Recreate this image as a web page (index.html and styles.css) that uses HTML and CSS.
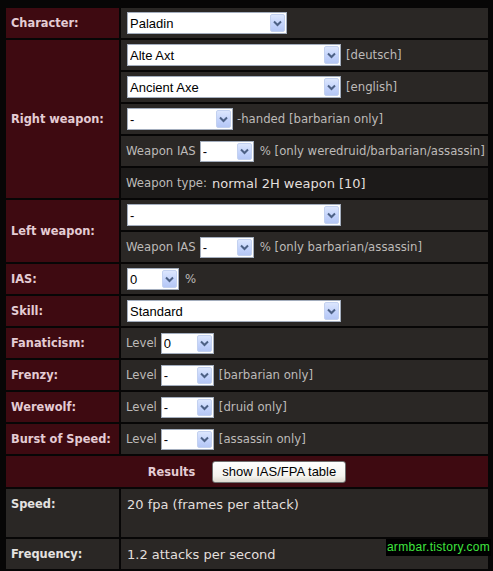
FILE: index.html
```html
<!DOCTYPE html>
<html>
<head>
<meta charset="utf-8">
<link rel="stylesheet" href="styles.css">
</head>
<body>
<div class="calc">
  <div class="lbl">Character:</div>
  <div class="val">
    <span class="sel w160"><select><option>Paladin</option></select><span class="arr"><svg width="9" height="7" viewBox="0 0 9 7"><path d="M1 1.5 L4.5 5 L8 1.5" stroke="#4d6185" stroke-width="2" fill="none"/></svg></span></span>
  </div>

  <div class="lbl rw">Right weapon:</div>
  <div class="val">
    <span class="sel w214"><select><option>Alte Axt</option></select><span class="arr"><svg width="9" height="7" viewBox="0 0 9 7"><path d="M1 1.5 L4.5 5 L8 1.5" stroke="#4d6185" stroke-width="2" fill="none"/></svg></span></span>
    <span class="note after">[deutsch]</span>
  </div>
  <div class="val">
    <span class="sel w214"><select><option>Ancient Axe</option></select><span class="arr"><svg width="9" height="7" viewBox="0 0 9 7"><path d="M1 1.5 L4.5 5 L8 1.5" stroke="#4d6185" stroke-width="2" fill="none"/></svg></span></span>
    <span class="note after">[english]</span>
  </div>
  <div class="val">
    <span class="sel w106"><select><option>-</option></select><span class="arr"><svg width="9" height="7" viewBox="0 0 9 7"><path d="M1 1.5 L4.5 5 L8 1.5" stroke="#4d6185" stroke-width="2" fill="none"/></svg></span></span>
    <span class="note tight">-handed [barbarian only]</span>
  </div>
  <div class="val">
    <span class="note before">Weapon IAS</span>
    <span class="sel w54 small"><select><option>-</option></select><span class="arr"><svg width="9" height="7" viewBox="0 0 9 7"><path d="M1 1.5 L4.5 5 L8 1.5" stroke="#4d6185" stroke-width="2" fill="none"/></svg></span></span>
    <span class="note pct">% [only weredruid/barbarian/assassin]</span>
  </div>
  <div class="val dark">
    <span class="note">Weapon type:</span>
    <span class="big type">normal 2H weapon [10]</span>
  </div>

  <div class="lbl lw">Left weapon:</div>
  <div class="val">
    <span class="sel w214"><select><option>-</option></select><span class="arr"><svg width="9" height="7" viewBox="0 0 9 7"><path d="M1 1.5 L4.5 5 L8 1.5" stroke="#4d6185" stroke-width="2" fill="none"/></svg></span></span>
  </div>
  <div class="val">
    <span class="note before">Weapon IAS</span>
    <span class="sel w54 small"><select><option>-</option></select><span class="arr"><svg width="9" height="7" viewBox="0 0 9 7"><path d="M1 1.5 L4.5 5 L8 1.5" stroke="#4d6185" stroke-width="2" fill="none"/></svg></span></span>
    <span class="note pct">% [only barbarian/assassin]</span>
  </div>

  <div class="lbl">IAS:</div>
  <div class="val">
    <span class="sel w52"><select><option>0</option></select><span class="arr"><svg width="9" height="7" viewBox="0 0 9 7"><path d="M1 1.5 L4.5 5 L8 1.5" stroke="#4d6185" stroke-width="2" fill="none"/></svg></span></span>
    <span class="note pct">%</span>
  </div>

  <div class="lbl">Skill:</div>
  <div class="val">
    <span class="sel w214"><select><option>Standard</option></select><span class="arr"><svg width="9" height="7" viewBox="0 0 9 7"><path d="M1 1.5 L4.5 5 L8 1.5" stroke="#4d6185" stroke-width="2" fill="none"/></svg></span></span>
  </div>

  <div class="lbl">Fanaticism:</div>
  <div class="val">
    <span class="note before">Level</span>
    <span class="sel w53 small"><select><option>0</option></select><span class="arr"><svg width="9" height="7" viewBox="0 0 9 7"><path d="M1 1.5 L4.5 5 L8 1.5" stroke="#4d6185" stroke-width="2" fill="none"/></svg></span></span>
  </div>

  <div class="lbl">Frenzy:</div>
  <div class="val">
    <span class="note before">Level</span>
    <span class="sel w53 small"><select><option>-</option></select><span class="arr"><svg width="9" height="7" viewBox="0 0 9 7"><path d="M1 1.5 L4.5 5 L8 1.5" stroke="#4d6185" stroke-width="2" fill="none"/></svg></span></span>
    <span class="note after">[barbarian only]</span>
  </div>

  <div class="lbl">Werewolf:</div>
  <div class="val">
    <span class="note before">Level</span>
    <span class="sel w53 small"><select><option>-</option></select><span class="arr"><svg width="9" height="7" viewBox="0 0 9 7"><path d="M1 1.5 L4.5 5 L8 1.5" stroke="#4d6185" stroke-width="2" fill="none"/></svg></span></span>
    <span class="note after">[druid only]</span>
  </div>

  <div class="lbl">Burst of Speed:</div>
  <div class="val">
    <span class="note before">Level</span>
    <span class="sel w53 small"><select><option>-</option></select><span class="arr"><svg width="9" height="7" viewBox="0 0 9 7"><path d="M1 1.5 L4.5 5 L8 1.5" stroke="#4d6185" stroke-width="2" fill="none"/></svg></span></span>
    <span class="note after">[assassin only]</span>
  </div>

  <div class="results">
    <span class="res-title">Results</span>
    <button class="btn">show IAS/FPA table</button>
  </div>

  <div class="lbl gray top">Speed:</div>
  <div class="val tall top"><span class="big">20 fpa (frames per attack)</span></div>

  <div class="lbl gray">Frequency:</div>
  <div class="val"><span class="big">1.2 attacks per second</span></div>
</div>
<div class="mark">armbar.tistory.com</div>
</body>
</html>
```
FILE: styles.css
```css
body {
  margin: 0;
  padding: 8px 0 0 6px;
  background: #070606;
  font-family: "DejaVu Sans", Verdana, sans-serif;
  height: 563px;
  overflow: hidden;
}

.calc {
  display: grid;
  grid-template-columns: 113px 367px;
  gap: 2px;
  width: 482px;
}

.lbl {
  background: #3e0a11;
  color: #e4ccd4;
  font-weight: bold;
  font-size: 11.4px;
  padding-left: 5px;
  display: flex;
  align-items: center;
  white-space: nowrap;
}

.lbl.rw { grid-row: span 5; }
.lbl.lw { grid-row: span 2; }

.lbl.gray {
  background: #2a2725;
  color: #e4e2e0;
}

.val {
  background: #2a2725;
  color: #bdbab8;
  font-size: 11.7px;
  height: 30px;
  box-sizing: border-box;
  padding-left: 5px;
  display: flex;
  align-items: center;
}

.val.dark { background: #1c1a19; }

.val.tall { height: 48px; }

.top { align-items: flex-start; padding-top: 8px; }
.val.top { padding-top: 8px; }

.note { white-space: nowrap; }
.note.after { margin-left: 5px; }
.note.tight { margin-left: 4px; }
.note.before { margin-right: 4px; }
.note.pct { margin-left: 6px; }

.big {
  font-size: 13px;
  color: #e2dfdc;
  white-space: nowrap;
  margin-left: 1px;
}
.big.type { margin-left: 5px; }

.sel {
  display: inline-flex;
  height: 22px;
  box-sizing: border-box;
  border: 1px solid #a3adbd;
  background: #fff;
  padding: 1px;
  margin-left: 1px;
}
.note.before + .sel { margin-left: 0; }
.sel.small { height: 21px; }

.sel select {
  appearance: none;
  -webkit-appearance: none;
  border: 0;
  outline: 0;
  background: #fff;
  font-family: "Liberation Sans", Arial, sans-serif;
  font-size: 13px;
  color: #000;
  padding: 0 0 0 1px;
  margin: 0;
  flex: 1;
  min-width: 0;
  height: 100%;
}

.arr {
  width: 15px;
  flex: none;
  box-sizing: border-box;
  border: 1px solid #c3d1f0;
  border-radius: 2px;
  background: linear-gradient(#dce6fd, #c2d2fb 60%, #b5c7f5);
  display: flex;
  align-items: center;
  justify-content: center;
}

.w160 { width: 160px; }
.w214 { width: 214px; }
.w106 { width: 106px; }
.w54 { width: 54px; }
.w53 { width: 53px; }
.w52 { width: 52px; }

.results {
  grid-column: 1 / -1;
  background: #3e0a11;
  height: 31px;
  display: flex;
  align-items: center;
  justify-content: center;
  gap: 17px;
}

.res-title {
  color: #e4ccd4;
  font-weight: bold;
  font-size: 11.4px;
}

.btn {
  font-family: "Liberation Sans", Arial, sans-serif;
  font-size: 13px;
  color: #000;
  height: 22px;
  padding: 0 9px;
  border: 1px solid #6f6f6f;
  border-radius: 3px;
  background: linear-gradient(#ffffff, #f4f3ee 70%, #dedbd0);
}

.mark {
  position: absolute;
  left: 386px;
  top: 539px;
  width: 105px;
  height: 17px;
  background: #000;
  color: #3fe53f;
  font-family: "Liberation Sans", Arial, sans-serif;
  font-size: 12px;
  letter-spacing: 0.3px;
  line-height: 17px;
  text-align: center;
}
```
